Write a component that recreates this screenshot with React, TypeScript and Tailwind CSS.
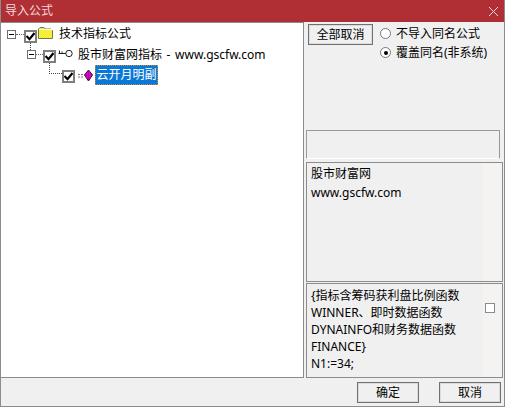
const FONT = "font-['Noto_Sans','Noto_Sans_CJK_SC',sans-serif]";

function Expander() {
  return (
    <span className="flex h-[9px] w-[9px] shrink-0 items-center justify-center border border-[#6f6f6f] bg-white">
      <span className="h-px w-[5px] bg-black" />
    </span>
  );
}

function DotsH({ width }: { width: number }) {
  return <span className="shrink-0 border-t border-dotted border-[#666]" style={{ width }} />;
}

function CheckMark() {
  return (
    <svg width="9" height="9" viewBox="0 0 9 9">
      <path d="M0.5 4 L3.5 7.2 L8.5 1" fill="none" stroke="#000" strokeWidth="2.2" />
    </svg>
  );
}

function Folder() {
  return (
    <svg width="15" height="12" viewBox="0 0 15 12" className="relative -top-px shrink-0">
      <defs>
        <pattern id="dither" width="2" height="2" patternUnits="userSpaceOnUse">
          <rect width="2" height="2" fill="#ffff00" />
          <rect width="1" height="1" fill="#e8e070" />
          <rect x="1" y="1" width="1" height="1" fill="#e8e070" />
        </pattern>
      </defs>
      <path d="M0.5 11.5 V2 L2 0.5 H6 L7.5 2 H13 L14.5 3.5 V11.5 Z" fill="url(#dither)" stroke="#77774a" />
      <path d="M1 2.5 H14" stroke="#fffff0" />
    </svg>
  );
}

function KeyIcon() {
  return (
    <svg width="15" height="9" viewBox="0 0 15 9" className="relative -top-px shrink-0">
      <circle cx="11" cy="4.5" r="3.2" fill="#fff" stroke="#222" />
      <path d="M8 4.5 H0.5 M1.5 4.5 V1.5 M4 4.5 V2.5" stroke="#222" fill="none" />
    </svg>
  );
}

function FormulaIcon() {
  return (
    <svg width="15" height="13" viewBox="0 0 15 13" className="shrink-0">
      <path d="M0 5.5 H6 M0 8 H6" stroke="#777" strokeDasharray="2 1" />
      <path d="M10.5 1 L14.5 6 L10.5 12 L6.5 6 Z" fill="#e800d0" stroke="#30102c" />
      <path d="M6.5 6 H14.5 M10.5 1 V12" stroke="#80107a" strokeWidth="0.5" />
    </svg>
  );
}

function WinButton({ label }: { label: string }) {
  return (
    <button
      type="button"
      className="flex h-[21px] w-[62px] items-center justify-center border border-[#707070] bg-[#f0f0f0] text-[12px] text-black shadow-[inset_0_0_0_1px_#dcdcdc]"
    >
      {label}
    </button>
  );
}

function Radio({ label, checked }: { label: string; checked?: boolean }) {
  return (
    <div className="flex h-[19px] items-center">
      <span className="flex h-[11px] w-[11px] items-center justify-center rounded-full border border-[#777] bg-white">
        {checked && <span className="h-[4px] w-[4px] rounded-full bg-black" />}
      </span>
      <span className="ml-[5px] text-[12px] text-black">{label}</span>
    </div>
  );
}

export default function App() {
  return (
    <div className={`flex h-[407px] w-[505px] flex-col overflow-hidden border-x border-b border-[#8c8c8c] bg-[#f0f0f0] ${FONT}`}>
      <div className="-mx-px flex h-[22px] shrink-0 items-center justify-between bg-[#b02f35] pl-[5px] pr-[5px]">
        <span className="text-[12px] text-[#f3d9da]">导入公式</span>
        <svg width="11" height="11" viewBox="0 0 11 11" className="mr-[1px]">
          <path d="M1 1 L10 10 M10 1 L1 10" stroke="#f3d9da" />
        </svg>
      </div>

      <div className="flex h-[356px] shrink-0">
        <div className="flex w-[303px] shrink-0 flex-col border-y border-r border-[#8c8c8c] bg-white pl-[6px] text-[12px] text-black">
          <div className="flex h-[21px] items-center pt-[1px]">
            <Expander />
            <DotsH width={8} />
            <span className="relative top-[2px] flex h-[13px] w-[13px] shrink-0 items-center justify-center border-2 border-[#7f7f7f] bg-white">
              <CheckMark />
              <span className="absolute left-[4px] top-[11px] h-[7px] border-l border-dotted border-[#444]" />
            </span>
            <span className="ml-px"><Folder /></span>
            <span className="ml-[6px]">技术指标公式</span>
          </div>
          <div className="ml-[20px] flex h-[21px] items-center">
            <Expander />
            <DotsH width={7} />
            <span className="relative top-[2px] flex h-[13px] w-[13px] shrink-0 items-center justify-center border-2 border-[#7f7f7f] bg-white">
              <CheckMark />
            </span>
            <span className="ml-[2px]"><KeyIcon /></span>
            <span className="ml-[5px] [word-spacing:1.5px]">股市财富网指标 - www.gscfw.com</span>
          </div>
          <div className="relative ml-[55px] flex h-[21px] items-center">
            <span className="absolute -left-[13px] -top-[2px] h-[11px] w-[13px] border-b border-l border-dotted border-[#444]" />
            <span className="relative top-[1px] flex h-[13px] w-[13px] shrink-0 items-center justify-center border-2 border-[#7f7f7f] bg-white">
              <CheckMark />
            </span>
            <span className="ml-[3px]"><FormulaIcon /></span>
            <span className="relative -top-px ml-[2px] flex h-[20px] w-[63px] items-center justify-center border border-dotted border-[#c88a2a] bg-[#0a78d7] text-white">云开月明副</span>
          </div>
        </div>

        <div className="ml-px flex min-w-0 flex-1 flex-col pl-px">
          <div className="flex h-[108px] shrink-0 pl-[2px] pt-[2px]">
            <button
              type="button"
              className="flex h-[21px] w-[65px] items-center justify-center border border-[#707070] bg-[#f0f0f0] text-[12px] text-black shadow-[inset_0_0_0_1px_#dcdcdc]"
            >
              全部取消
            </button>
            <div className="ml-[7px] flex flex-col">
              <Radio label="不导入同名公式" />
              <Radio label="覆盖同名(非系统)" checked />
            </div>
          </div>
          <div className="h-[29px] w-[194px] shrink-0 border border-[#999] border-b-white" />
          <div className="mt-[3px] flex h-[120px] w-[197px] shrink-0 border border-[#8c8c8c] text-[12px] leading-[19px] text-black">
            <div className="w-[176px] shrink-0 pl-[4px] pt-[1px]">
              <div>股市财富网</div>
              <div>www.gscfw.com</div>
            </div>
            <div className="flex-1 bg-[#f4f3f1]" />
          </div>
          <div className="mt-px flex min-h-0 w-[197px] flex-1 border border-[#8c8c8c] text-[12px] leading-[17px] text-black">
            <div className="w-[176px] shrink-0 pl-[4px] pt-[3px]">
              <div>{"{指标含筹码获利盘比例函数"}</div>
              <div>WINNER、即时数据函数</div>
              <div>DYNAINFO和财务数据函数</div>
              <div>{"FINANCE}"}</div>
              <div>N1:=34;</div>
            </div>
            <div className="flex-1 bg-[#f4f3f1] pl-[2px] pt-[19px]">
              <span className="block h-[10px] w-[10px] border border-[#8a8a8a] bg-white" />
            </div>
          </div>
        </div>
      </div>

      <div className="flex flex-1 items-start justify-end gap-[20px] pr-[3px] pt-[4px]">
        <WinButton label="确定" />
        <WinButton label="取消" />
      </div>
    </div>
  );
}
